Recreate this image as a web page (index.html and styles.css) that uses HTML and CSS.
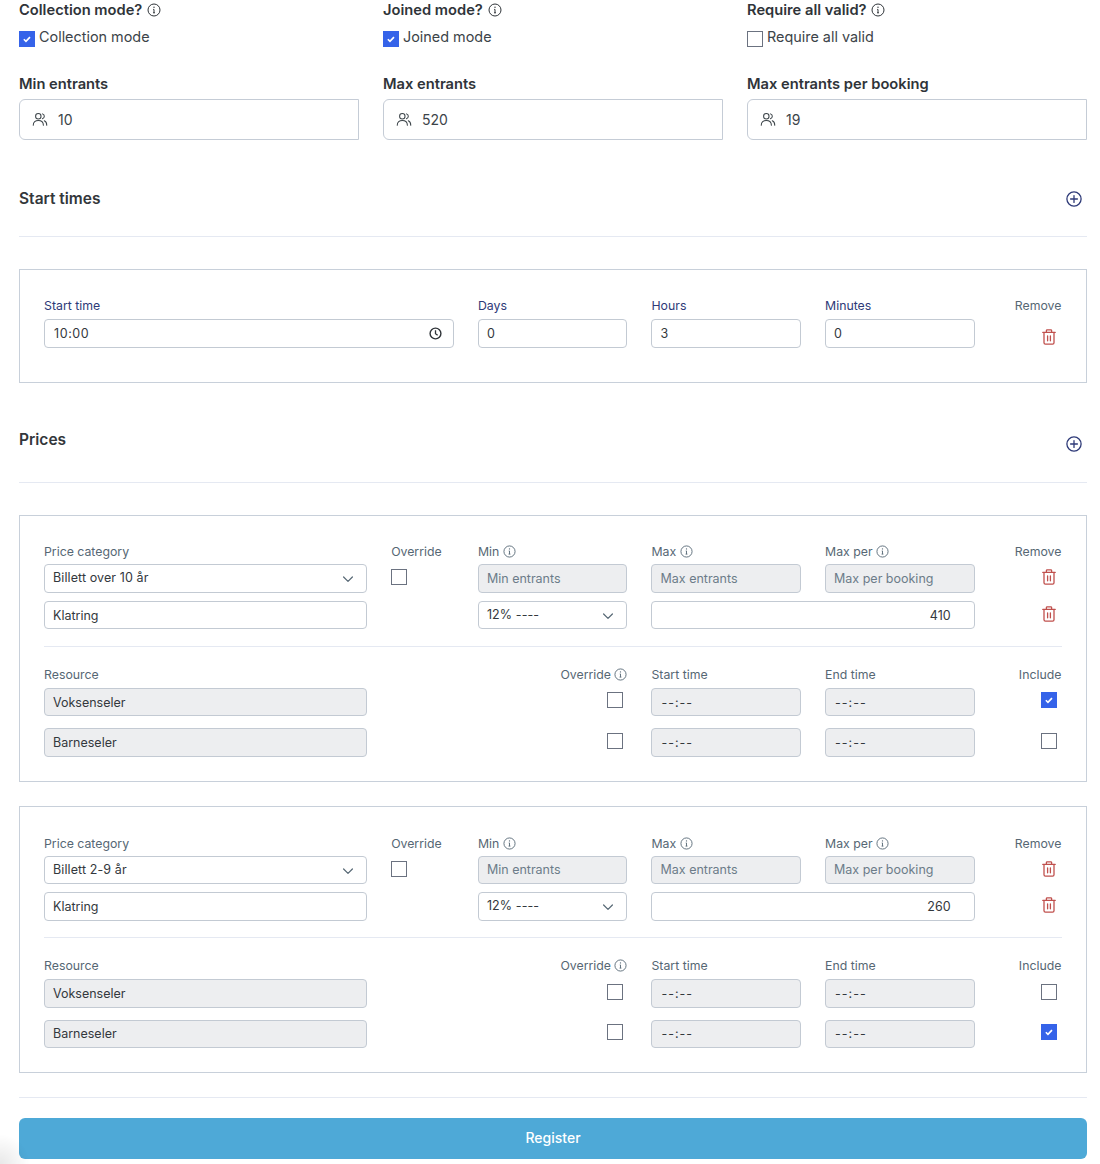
FILE: index.html
```html
<!DOCTYPE html>
<html lang="en">
<head>
    <meta charset="UTF-8">
    <meta name="viewport" content="width=device-width, initial-scale=1.0">
    <title>Register activity</title>
    <link rel="stylesheet" href="styles.css">
</head>
<body>
    <!-- shared icons -->
    <svg class="sprite" aria-hidden="true">
        <symbol id="i-info" viewBox="0 0 14 14">
            <circle cx="7" cy="7" r="6" fill="none" stroke="currentColor" stroke-width="1"/>
            <path d="M7 6.4v3.4M6 9.8h2M6.2 6.4H7" fill="none" stroke="currentColor" stroke-width="1"/>
            <circle cx="7" cy="4.2" r=".7" fill="currentColor"/>
        </symbol>
        <symbol id="i-users" viewBox="0 0 16 16">
            <circle cx="6.2" cy="4.6" r="2.9" fill="none" stroke="currentColor" stroke-width="1.1"/>
            <path d="M.8 14c0-3 2.3-5 5.4-5s5.4 2 5.4 5M10.6 2c1.3.4 2 1.4 2 2.6s-.7 2.2-2 2.6M12.6 9.4c1.6.7 2.6 2.4 2.6 4.6" fill="none" stroke="currentColor" stroke-width="1.1" stroke-linecap="round"/>
        </symbol>
        <symbol id="i-plus" viewBox="0 0 16 16">
            <circle cx="8" cy="8" r="7.1" fill="none" stroke="currentColor" stroke-width="1.3"/>
            <path d="M8 4.6v6.8M4.6 8h6.8" fill="none" stroke="currentColor" stroke-width="1.3" stroke-linecap="round"/>
        </symbol>
        <symbol id="i-trash" viewBox="0 0 14 16">
            <path d="M.8 3.4h12.4M4.4 3.4V1.6c0-.5.3-.8.8-.8h3.6c.5 0 .8.3.8.8v1.8M2 3.4v10.4c0 .9.5 1.4 1.4 1.4h7.2c.9 0 1.4-.5 1.4-1.4V3.4M5.6 7v4.8M8.4 7v4.8" fill="none" stroke="currentColor" stroke-width="1.3" stroke-linecap="round" stroke-linejoin="round"/>
        </symbol>
        <symbol id="i-chevron" viewBox="0 0 12 12">
            <path d="M1.6 4l4.4 4.4L10.4 4" fill="none" stroke="currentColor" stroke-width="1.2" stroke-linecap="round" stroke-linejoin="round"/>
        </symbol>
        <symbol id="i-clock" viewBox="0 0 12 12">
            <circle cx="6" cy="6" r="5" fill="none" stroke="currentColor" stroke-width="1.3"/>
            <path d="M6 3v3.2l2 1.4" fill="none" stroke="currentColor" stroke-width="1.2"/>
        </symbol>
    </svg>

    <form class="page">
        <div class="top-grid">
            <div class="mode">
                <div class="top-label">Collection mode? <svg class="info info-top"><use href="#i-info"/></svg></div>
                <label class="check-line"><input type="checkbox" class="check" checked>Collection mode</label>
            </div>
            <div class="mode">
                <div class="top-label">Joined mode? <svg class="info info-top"><use href="#i-info"/></svg></div>
                <label class="check-line"><input type="checkbox" class="check" checked>Joined mode</label>
            </div>
            <div class="mode">
                <div class="top-label">Require all valid? <svg class="info info-top"><use href="#i-info"/></svg></div>
                <label class="check-line"><input type="checkbox" class="check">Require all valid</label>
            </div>

            <div>
                <div class="top-label">Min entrants</div>
                <div class="big-input"><svg class="users"><use href="#i-users"/></svg><input type="text" value="10"></div>
            </div>
            <div>
                <div class="top-label">Max entrants</div>
                <div class="big-input"><svg class="users"><use href="#i-users"/></svg><input type="text" value="520"></div>
            </div>
            <div>
                <div class="top-label">Max entrants per booking</div>
                <div class="big-input"><svg class="users"><use href="#i-users"/></svg><input type="text" value="19"></div>
            </div>
        </div>

        <div class="section-head start-head">
            <h2>Start times</h2>
            <svg class="plus"><use href="#i-plus"/></svg>
        </div>

        <div class="card start-card">
            <div class="row labels indigo">
                <span class="span-5">Start time</span>
                <span class="span-2">Days</span>
                <span class="span-2">Hours</span>
                <span class="span-2">Minutes</span>
                <span class="remove-label">Remove</span>
            </div>
            <div class="row">
                <div class="span-5 field-icon">
                    <input type="text" class="field time" value="10:00">
                    <svg class="clock"><use href="#i-clock"/></svg>
                </div>
                <input type="text" class="field span-2 narrow" value="0">
                <input type="text" class="field span-2 narrow" value="3">
                <input type="text" class="field span-2 narrow" value="0">
                <div class="trash-cell start-trash"><svg class="trash"><use href="#i-trash"/></svg></div>
            </div>
        </div>

        <div class="section-head prices-head">
            <h2>Prices</h2>
            <svg class="plus"><use href="#i-plus"/></svg>
        </div>

        <div class="card price-card">
            <div class="row labels">
                <span class="span-4">Price category</span>
                <span>Override</span>
                <span class="span-2">Min <svg class="info"><use href="#i-info"/></svg></span>
                <span class="span-2">Max <svg class="info"><use href="#i-info"/></svg></span>
                <span class="span-2">Max per <svg class="info"><use href="#i-info"/></svg></span>
                <span class="remove-label">Remove</span>
            </div>
            <div class="row">
                <div class="span-4 field-icon">
                    <input type="text" class="field select" value="Billett over 10 år">
                    <svg class="chevron"><use href="#i-chevron"/></svg>
                </div>
                <div class="check-cell"><input type="checkbox" class="check"></div>
                <input type="text" class="field span-2" placeholder="Min entrants" disabled>
                <input type="text" class="field span-2" placeholder="Max entrants" disabled>
                <input type="text" class="field span-2" placeholder="Max per booking" disabled>
                <div class="trash-cell"><svg class="trash"><use href="#i-trash"/></svg></div>
            </div>
            <div class="row second">
                <input type="text" class="field span-4" value="Klatring">
                <div></div>
                <div class="span-2 field-icon">
                    <input type="text" class="field select" value="12% ----">
                    <svg class="chevron"><use href="#i-chevron"/></svg>
                </div>
                <input type="text" class="field span-4 amount" value="410">
                <div class="trash-cell"><svg class="trash"><use href="#i-trash"/></svg></div>
            </div>
            <hr class="inner-rule">
            <div class="row labels resource-labels">
                <span class="span-5">Resource</span>
                <span class="span-2 align-right">Override <svg class="info"><use href="#i-info"/></svg></span>
                <span class="span-2">Start time</span>
                <span class="span-2">End time</span>
                <span class="remove-label">Include</span>
            </div>
            <div class="row resource">
                <input type="text" class="field span-4" value="Voksenseler" disabled>
                <div class="span-3 check-cell right"><input type="checkbox" class="check"></div>
                <input type="text" class="field span-2 time" value="--:--" disabled>
                <input type="text" class="field span-2 time" value="--:--" disabled>
                <div class="check-cell include"><input type="checkbox" class="check" checked></div>
            </div>
            <div class="row resource second-res">
                <input type="text" class="field span-4" value="Barneseler" disabled>
                <div class="span-3 check-cell right"><input type="checkbox" class="check"></div>
                <input type="text" class="field span-2 time" value="--:--" disabled>
                <input type="text" class="field span-2 time" value="--:--" disabled>
                <div class="check-cell include"><input type="checkbox" class="check"></div>
            </div>
        </div>

        <div class="card price-card">
            <div class="row labels">
                <span class="span-4">Price category</span>
                <span>Override</span>
                <span class="span-2">Min <svg class="info"><use href="#i-info"/></svg></span>
                <span class="span-2">Max <svg class="info"><use href="#i-info"/></svg></span>
                <span class="span-2">Max per <svg class="info"><use href="#i-info"/></svg></span>
                <span class="remove-label">Remove</span>
            </div>
            <div class="row">
                <div class="span-4 field-icon">
                    <input type="text" class="field select" value="Billett 2-9 år">
                    <svg class="chevron"><use href="#i-chevron"/></svg>
                </div>
                <div class="check-cell"><input type="checkbox" class="check"></div>
                <input type="text" class="field span-2" placeholder="Min entrants" disabled>
                <input type="text" class="field span-2" placeholder="Max entrants" disabled>
                <input type="text" class="field span-2" placeholder="Max per booking" disabled>
                <div class="trash-cell"><svg class="trash"><use href="#i-trash"/></svg></div>
            </div>
            <div class="row second">
                <input type="text" class="field span-4" value="Klatring">
                <div></div>
                <div class="span-2 field-icon">
                    <input type="text" class="field select" value="12% ----">
                    <svg class="chevron"><use href="#i-chevron"/></svg>
                </div>
                <input type="text" class="field span-4 amount" value="260">
                <div class="trash-cell"><svg class="trash"><use href="#i-trash"/></svg></div>
            </div>
            <hr class="inner-rule">
            <div class="row labels resource-labels">
                <span class="span-5">Resource</span>
                <span class="span-2 align-right">Override <svg class="info"><use href="#i-info"/></svg></span>
                <span class="span-2">Start time</span>
                <span class="span-2">End time</span>
                <span class="remove-label">Include</span>
            </div>
            <div class="row resource">
                <input type="text" class="field span-4" value="Voksenseler" disabled>
                <div class="span-3 check-cell right"><input type="checkbox" class="check"></div>
                <input type="text" class="field span-2 time" value="--:--" disabled>
                <input type="text" class="field span-2 time" value="--:--" disabled>
                <div class="check-cell include"><input type="checkbox" class="check"></div>
            </div>
            <div class="row resource second-res">
                <input type="text" class="field span-4" value="Barneseler" disabled>
                <div class="span-3 check-cell right"><input type="checkbox" class="check"></div>
                <input type="text" class="field span-2 time" value="--:--" disabled>
                <input type="text" class="field span-2 time" value="--:--" disabled>
                <div class="check-cell include"><input type="checkbox" class="check" checked></div>
            </div>
        </div>

        <hr class="end-rule">
        <button type="button" class="submit-btn">Register</button>
    </form>

    <div class="corner-shade"></div>
</body>
</html>
```

FILE: styles.css
```css
* {
    box-sizing: border-box;
}

html, body {
    margin: 0;
    height: 1164px;
    overflow: hidden;
}

body {
    font-family: Inter, "Liberation Sans", sans-serif;
    background: white;
    color: #2f3439;
}

.sprite {
    display: none;
}

.page {
    padding: 0 13px 0 19px;
}

/* top settings */
.top-grid {
    display: grid;
    grid-template-columns: repeat(3, 1fr);
    column-gap: 24px;
}

.top-label {
    font-size: 14.7px;
    font-weight: 600;
    line-height: 20px;
    color: #2f3439;
}

.mode {
    margin-bottom: 27px;
}

.info {
    width: 13px;
    height: 13px;
    color: #5a6b78;
    vertical-align: -2px;
}

.info-top {
    width: 14px;
    height: 14px;
    color: #2f3439;
    margin-left: 1px;
}

.check-line {
    display: flex;
    align-items: flex-start;
    gap: 4px;
    margin-top: 7px;
    font-size: 14.4px;
    line-height: 20px;
    color: #3c4449;
}

.check {
    appearance: none;
    flex: none;
    display: block;
    width: 16px;
    height: 16px;
    margin: 0;
    border: 1px solid #6b7280;
    background: white;
}

.check:checked {
    border-color: #3563e9;
    background: #3563e9 url("data:image/svg+xml,%3Csvg viewBox='0 0 16 16' xmlns='http://www.w3.org/2000/svg'%3E%3Cpath d='M4.4 8.3l2.4 2.3 4.6-4.8' fill='none' stroke='white' stroke-width='1.9'/%3E%3C/svg%3E") center / 100% 100% no-repeat;
}

.check-line .check {
    margin-top: 4px;
}

.big-input {
    display: flex;
    align-items: center;
    height: 41px;
    margin-top: 5px;
    padding-left: 12px;
    border: 1px solid #c5ccd6;
    border-radius: 6px 0 0 6px;
}

.big-input input {
    flex: 1;
    min-width: 0;
    border: none;
    outline: none;
    padding: 0;
    font: inherit;
    font-size: 14px;
    color: #3c4449;
}

.users {
    width: 16px;
    height: 15px;
    margin-right: 10px;
    color: #3c4449;
}

/* section headers */
.section-head {
    display: flex;
    justify-content: space-between;
    border-bottom: 1px solid #e5e9f2;
}

.section-head h2 {
    margin: 1px 0 0;
    font-size: 15.5px;
    font-weight: 600;
    line-height: 24px;
    color: #33373b;
}

.plus {
    width: 16px;
    height: 16px;
    color: #2e3a78;
    margin-right: 5px;
}

.start-head {
    margin-top: 46px;
    height: 51px;
    margin-bottom: 32px;
}

.start-head .plus {
    margin-top: 5px;
}

.prices-head {
    margin-top: 44px;
    height: 56px;
    margin-bottom: 32px;
}

.prices-head .plus {
    margin-top: 9px;
}

/* cards */
.card {
    border: 1px solid #c8d0da;
    padding: 28.45px 24.6px 24px 24px;
}

.start-card {
    height: 114px;
}

.price-card {
    height: 267.1px;
    margin-bottom: 24px;
}

.row {
    display: grid;
    grid-template-columns: repeat(12, 1fr);
    column-gap: 24px;
}

.span-2 { grid-column: span 2; }
.span-3 { grid-column: span 3; }
.span-4 { grid-column: span 4; }
.span-5 { grid-column: span 5; }

.labels {
    font-size: 12.3px;
    line-height: 16px;
    color: #566774;
    margin-bottom: 4px;
    white-space: nowrap;
}

.indigo {
    color: #2e3a78;
    margin-bottom: 5px;
}

.resource-labels {
    margin-bottom: 5px;
}

.remove-label {
    color: #566774;
    text-align: right;
}

.align-right {
    text-align: right;
}

.field {
    display: block;
    width: 100%;
    height: 28.5px;
    padding: 0 8px;
    border: 1px solid #c3cad3;
    border-radius: 4px;
    outline: none;
    background: white;
    font-family: inherit;
    font-size: 12.5px;
    color: #33383d;
}

.field:disabled {
    background: #edeef0;
    color: #33383d;
    opacity: 1;
}

.field::placeholder {
    color: #6c7c89;
    opacity: 1;
}

.select {
    padding-bottom: 1.5px;
    letter-spacing: .1px;
}

.narrow {
    padding: 0 8px;
}

.time {
    padding-left: 9px;
    letter-spacing: .6px;
}

.field.time:disabled {
    letter-spacing: 1px;
}

.amount {
    text-align: right;
    padding-right: 23px;
}

.field-icon {
    position: relative;
}

.clock {
    position: absolute;
    right: 12px;
    top: 8px;
    width: 13px;
    height: 13px;
    color: #2f3439;
}

.chevron {
    position: absolute;
    right: 13px;
    top: 9px;
    width: 12px;
    height: 12px;
    color: #566774;
}

.check-cell {
    padding-top: 5px;
}

.check-cell.right {
    display: flex;
    justify-content: flex-end;
    padding-right: 4.5px;
    padding-top: 4.5px;
}

.check-cell.include {
    display: flex;
    justify-content: flex-end;
    padding-right: 4.5px;
    padding-top: 4.5px;
}

.trash-cell {
    display: flex;
    justify-content: flex-end;
    padding-right: 5.4px;
    padding-top: 5px;
}

.start-trash {
    padding-top: 10px;
}

.trash {
    width: 14px;
    height: 16px;
    color: #c0504d;
}

.second {
    margin-top: 8px;
}

.inner-rule {
    border: none;
    border-top: 1px solid #e5e9f2;
    margin: 16.5px -.6px 20px 0;
}

.second-res {
    margin-top: 12px;
}

/* footer */
.end-rule {
    border: none;
    border-top: 1px solid #e5e9f2;
    margin: 0 0 20px;
}

.submit-btn {
    display: block;
    width: 100%;
    height: 41px;
    padding: 0 0 2px;
    border: none;
    border-radius: 6px;
    background: #4ea9d7;
    color: white;
    font-family: inherit;
    font-size: 14px;
    font-weight: 500;
}

.corner-shade {
    position: fixed;
    left: 0;
    bottom: 0;
    width: 30px;
    height: 30px;
    background: radial-gradient(circle at 0 100%, rgba(0,0,0,.09), rgba(0,0,0,0) 70%);
}
```
